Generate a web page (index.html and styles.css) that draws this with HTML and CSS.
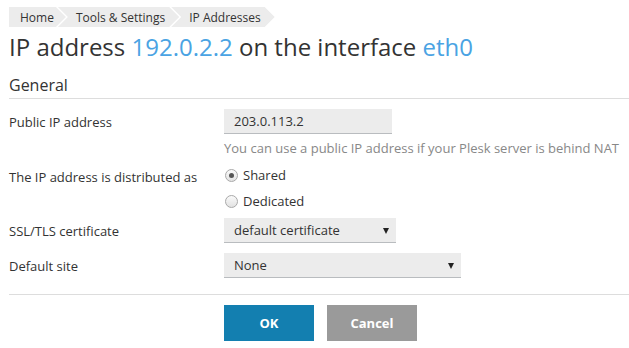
FILE: index.html
```html
<!DOCTYPE html>
<html lang="en">
<head>
    <meta charset="UTF-8">
    <title>IP address 192.0.2.2</title>
    <link rel="stylesheet" href="styles.css">
</head>
<body>
    <!-- Breadcrumbs -->
    <div class="breadcrumbs">
        <a class="crumb first" href="#">Home</a>
        <a class="crumb" href="#">Tools &amp; Settings</a>
        <a class="crumb" href="#">IP Addresses</a>
    </div>

    <h1 class="page-title">IP address <span class="hl">192.0.2.2</span> on the interface <span class="hl">eth0</span></h1>

    <form class="ip-form">
        <h2 class="section-title">General</h2>

        <div class="form-row">
            <label class="field-label">Public IP address</label>
            <div class="field">
                <input type="text" class="text-input" value="203.0.113.2">
                <div class="hint">You can use a public IP address if your Plesk server is behind NAT</div>
            </div>
        </div>

        <div class="form-row">
            <label class="field-label">The IP address is distributed as</label>
            <div class="field radios">
                <label class="radio"><input type="radio" name="dist" checked> Shared</label>
                <label class="radio"><input type="radio" name="dist"> Dedicated</label>
            </div>
        </div>

        <div class="form-row">
            <label class="field-label">SSL/TLS certificate</label>
            <div class="field">
                <div class="select-wrap cert">
                    <select class="select"><option>default certificate</option></select>
                </div>
            </div>
        </div>

        <div class="form-row">
            <label class="field-label">Default site</label>
            <div class="field">
                <div class="select-wrap site">
                    <select class="select"><option>None</option></select>
                </div>
            </div>
        </div>

        <div class="buttons">
            <button type="button" class="btn btn-ok">OK</button>
            <button type="button" class="btn btn-cancel">Cancel</button>
        </div>
    </form>
</body>
</html>
```

FILE: styles.css
```css
body {
    font-family: "Open Sans", Arial, sans-serif;
    font-size: 13px;
    color: #333;
    margin: 0;
    padding: 7px 0 0 9px;
    background: #fff;
}

.breadcrumbs {
    display: flex;
    height: 20px;
}

.crumb {
    display: flex;
    align-items: center;
    height: 20px;
    padding: 0 14px 0 18px;
    margin-left: -8px;
    background-color: #ececec;
    color: #333;
    text-decoration: none;
    font-size: 12px;
    clip-path: polygon(0 0, calc(100% - 10px) 0, 100% 50%, calc(100% - 10px) 100%, 0 100%, 10px 50%);
}

.crumb.first {
    margin-left: 0;
    padding-left: 11px;
    padding-right: 12px;
    clip-path: polygon(0 0, calc(100% - 10px) 0, 100% 50%, calc(100% - 10px) 100%, 0 100%);
}

.page-title {
    font-weight: normal;
    font-size: 24px;
    line-height: 32px;
    margin: 4px 0 0;
    color: #333;
}

.hl {
    color: #4aa3e3;
}

.section-title {
    font-weight: normal;
    font-size: 16px;
    line-height: 22px;
    margin: 11px 0 0;
    padding-bottom: 2px;
    border-bottom: 1px solid #ddd;
}

.form-row {
    display: grid;
    grid-template-columns: 215px 1fr;
}

.form-row:first-of-type {
    margin-top: 10px;
}

.field-label {
    padding-top: 5px;
    line-height: 16px;
}

.text-input {
    display: block;
    width: 168px;
    height: 25px;
    box-sizing: border-box;
    border: none;
    border-bottom: 1px solid #b9bcbf;
    background: #ececec;
    padding: 0 10px;
    font-family: inherit;
    font-size: 13px;
    color: #333;
}

.hint {
    color: #888;
    margin-top: 6px;
    line-height: 16px;
}

.form-row + .form-row {
    margin-top: 8px;
}

.radios {
    display: flex;
    flex-direction: column;
    gap: 8px;
    padding-top: 2px;
}

.radio {
    display: flex;
    align-items: center;
    gap: 5px;
    height: 18px;
}

.radio input {
    appearance: none;
    width: 13px;
    height: 13px;
    margin: 0 0 0 1px;
    border: 1px solid #a9a9a9;
    border-radius: 50%;
    background: linear-gradient(#fafafa, #e2e2e2);
    display: grid;
    place-items: center;
}

.radio input:checked::before {
    content: "";
    width: 5px;
    height: 5px;
    border-radius: 50%;
    background: #555;
}

.form-row:nth-of-type(3) {
    margin-top: 8px;
}

.form-row:nth-of-type(4) {
    margin-top: 10px;
}

.select-wrap {
    position: relative;
}

.select-wrap.cert {
    width: 172px;
}

.select-wrap.site {
    width: 237px;
}

.select {
    appearance: none;
    display: block;
    width: 100%;
    height: 25px;
    border: none;
    border-bottom: 1px solid #b9bcbf;
    border-radius: 0;
    background: #ececec;
    padding: 0 10px;
    font-family: inherit;
    font-size: 13px;
    color: #333;
}

.select-wrap::after {
    content: "";
    position: absolute;
    right: 7px;
    top: 10px;
    border-left: 3px solid transparent;
    border-right: 3px solid transparent;
    border-top: 6px solid #222;
}

.buttons {
    margin-top: 16px;
    border-top: 1px solid #ddd;
    padding: 10px 0 0 215px;
    display: flex;
    gap: 13px;
}

.btn {
    width: 90px;
    height: 36px;
    border: none;
    color: #fff;
    font-family: inherit;
    font-size: 13px;
    font-weight: bold;
    cursor: pointer;
}

.btn-ok {
    background-color: #137fb0;
}

.btn-cancel {
    background-color: #9a9a9a;
}
```
